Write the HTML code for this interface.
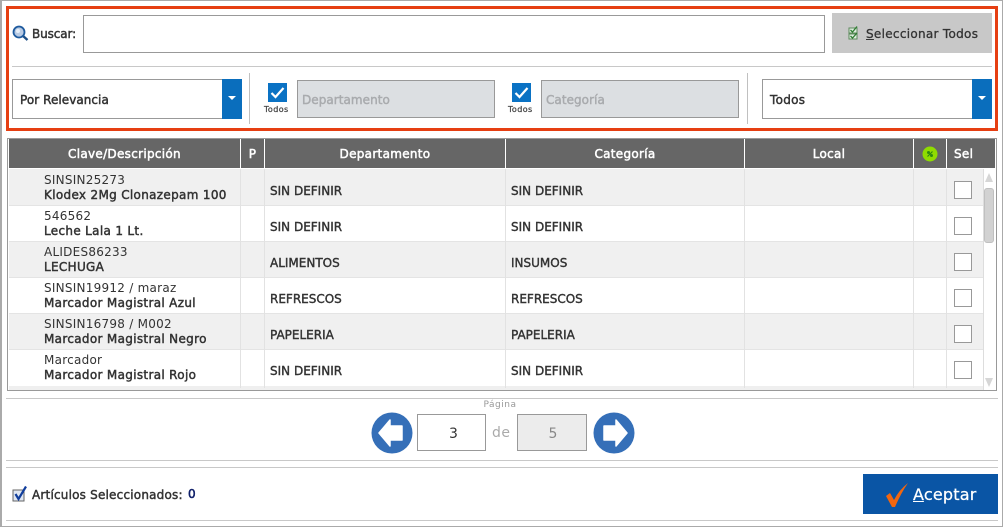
<!DOCTYPE html>
<html><head><meta charset="utf-8">
<style>
html,body{margin:0;padding:0;background:#fff;}
body{width:1004px;height:527px;position:relative;overflow:hidden;font-family:"DejaVu Sans","Liberation Sans",sans-serif;font-size:12px;color:#333;}
div{position:absolute;box-sizing:border-box;}
.t{white-space:nowrap;line-height:14px;letter-spacing:.25px;font-size:12px;}
.b{-webkit-text-stroke:.45px currentColor;letter-spacing:.05px;}
.m{letter-spacing:.32px;}
.hl{background:#c8c8c8;height:1px;}
.vl{background:#c0c0c0;width:1px;}
.in{background:#fff;border:1px solid #999;}
.dis{background:#dcdfe2;border:1px solid #999;}
.arr{background:#0a6ebd;width:20px;}
.arr:after{content:"";position:absolute;left:6px;top:17px;border-left:4px solid transparent;border-right:4px solid transparent;border-top:4px solid #fff;}
.ck{background:#0a72c4;width:19px;height:19px;}
.h{background:#666;height:29px;top:139px;color:#fff;text-align:center;line-height:31px;letter-spacing:.3px;font-size:12px;-webkit-text-stroke:.5px #fff;}
.row{left:9px;width:974px;height:36px;}
.col{top:169px;height:219px;width:1px;background:#e2e2e2;}
.c1{left:44px;color:#333;}
.sb{left:954px;width:18px;height:18px;background:#fff;border:1px solid #999;}
.cell{font-size:12px;color:#333;-webkit-text-stroke:.4px #333;white-space:nowrap;line-height:14px;}
.td{font-size:8px;color:#444;-webkit-text-stroke:.25px #444;white-space:nowrap;line-height:12px;letter-spacing:.4px;}
</style></head><body>
<div style="left:0;top:0;width:1003px;height:527px;border:1px solid #aaa;border-left-width:2px;"></div>
<div style="left:6px;top:6px;width:992px;height:125px;border:3px solid #e63f12;"></div>

<svg style="position:absolute;left:12px;top:25px" width="17" height="17" viewBox="0 0 17 17"><line x1="10" y1="10" x2="15.500" y2="15" stroke="#1d4f86" stroke-width="2.400"/><circle cx="7" cy="7" r="5.500" fill="#b9cbe4" stroke="#1d5a9e" stroke-width="1.800"/><circle cx="6" cy="6" r="2" fill="#e6eef8"/></svg>
<div class="t b" style="left:32px;top:27px;letter-spacing:-.1px;">Buscar:</div>
<div class="in" style="left:83px;top:15px;width:742px;height:38px;"></div>
<div style="left:832px;top:13px;width:160px;height:40px;background:#c8c8c8;"></div>
<svg style="position:absolute;left:848px;top:26px" width="12" height="15" viewBox="0 0 12 15"><rect x="1" y="2" width="8" height="5" fill="#dfeee0" stroke="#5c8a5c"/><rect x="1" y="8" width="8" height="5" fill="#dfeee0" stroke="#5c8a5c"/><path d="M2.500 4 L4.500 6 L9 .500 M2.500 10 L4.500 12 L9 7" fill="none" stroke="#2f7d32" stroke-width="1.300"/></svg>
<div class="t" style="left:866px;top:27px;letter-spacing:.3px;color:#333;-webkit-text-stroke:.3px #333;"><span style="text-decoration:underline">S</span>eleccionar Todos</div>
<div class="hl" style="left:12px;top:66px;width:980px;"></div>

<div class="in" style="left:12px;top:79px;width:230px;height:40px;"></div>
<div class="arr" style="left:222px;top:79px;height:40px;"></div>
<div class="t b" style="left:20px;top:93px;letter-spacing:.05px;">Por Relevancia</div>
<div class="vl" style="left:249px;top:73px;height:51px;"></div>

<div class="ck" style="left:268px;top:83px;"></div>
<svg style="position:absolute;left:268px;top:83px" width="19" height="19" viewBox="0 0 19 19"><path d="M3.500 10 L7.500 14 L15.500 5" fill="none" stroke="#fff" stroke-width="2.200"/></svg>
<div class="td" style="left:264px;top:104px;">Todos</div>
<div class="dis" style="left:297px;top:80px;width:198px;height:38px;"></div>
<div class="t b" style="left:302px;top:93px;color:#a9abae;">Departamento</div>

<div class="ck" style="left:512px;top:83px;"></div>
<svg style="position:absolute;left:512px;top:83px" width="19" height="19" viewBox="0 0 19 19"><path d="M3.500 10 L7.500 14 L15.500 5" fill="none" stroke="#fff" stroke-width="2.200"/></svg>
<div class="td" style="left:508px;top:104px;">Todos</div>
<div class="dis" style="left:541px;top:80px;width:198px;height:38px;"></div>
<div class="t b" style="left:546px;top:93px;color:#a9abae;">Categoría</div>
<div class="vl" style="left:747px;top:73px;height:51px;"></div>

<div class="in" style="left:762px;top:79px;width:230px;height:40px;"></div>
<div class="arr" style="left:972px;top:79px;height:40px;"></div>
<div class="t b" style="left:770px;top:93px;letter-spacing:.3px;">Todos</div>

<!-- table -->
<div style="left:7px;top:138px;width:990px;height:253px;border:1px solid #999;"></div>
<div class="h" style="left:9px;width:231px;">Clave/Descripción</div>
<div class="h" style="left:241px;width:23px;">P</div>
<div class="h" style="left:265px;width:240px;">Departamento</div>
<div class="h" style="left:506px;width:238px;">Categoría</div>
<div class="h" style="left:745px;width:168px;">Local</div>
<div class="h" style="left:914px;width:32px;"></div>
<div class="h" style="left:947px;width:48px;text-align:left;padding-left:7px;">Sel</div>
<svg style="position:absolute;left:922px;top:146px" width="16" height="16" viewBox="0 0 16 16"><circle cx="8" cy="8" r="7.500" fill="#8fdc00"/><circle cx="6.500" cy="6.500" r="1.500" fill="#2d8a10"/><circle cx="9.500" cy="9.500" r="1.500" fill="#2d8a10"/><path d="M5.500 10.500 L10.500 5.500" stroke="#2d8a10" stroke-width="1.200"/></svg>

<div class="row" style="top:169px;background:#f0f0f0;"></div>
<div class="row" style="top:205px;background:#fff;"></div>
<div class="row" style="top:241px;background:#f0f0f0;"></div>
<div class="row" style="top:277px;background:#fff;"></div>
<div class="row" style="top:313px;background:#f0f0f0;"></div>
<div class="row" style="top:349px;background:#fff;"></div>
<div class="hl" style="left:9px;top:205px;width:974px;background:#e4e4e4;"></div>
<div class="hl" style="left:9px;top:241px;width:974px;background:#e4e4e4;"></div>
<div class="hl" style="left:9px;top:277px;width:974px;background:#e4e4e4;"></div>
<div class="hl" style="left:9px;top:313px;width:974px;background:#e4e4e4;"></div>
<div class="hl" style="left:9px;top:349px;width:974px;background:#e4e4e4;"></div>
<div style="left:9px;top:386px;width:974px;height:4px;background:#efefef;"></div>
<div class="col" style="left:240px;"></div>
<div class="col" style="left:264px;"></div>
<div class="col" style="left:505px;"></div>
<div class="col" style="left:744px;"></div>
<div class="col" style="left:913px;"></div>
<div class="col" style="left:946px;"></div>

<div class="t c1" style="top:173px;">SINSIN25273</div><div class="t c1 b m" style="top:188px;">Klodex 2Mg Clonazepam 100</div>
<div class="t c1" style="top:209px;">546562</div><div class="t c1 b m" style="top:224px;">Leche Lala 1 Lt.</div>
<div class="t c1" style="top:245px;">ALIDES86233</div><div class="t c1 b m" style="top:260px;">LECHUGA</div>
<div class="t c1" style="top:281px;">SINSIN19912 / maraz</div><div class="t c1 b m" style="top:296px;">Marcador Magistral Azul</div>
<div class="t c1" style="top:317px;">SINSIN16798 / M002</div><div class="t c1 b m" style="top:332px;">Marcador Magistral Negro</div>
<div class="t c1" style="top:353px;">Marcador</div><div class="t c1 b m" style="top:368px;">Marcador Magistral Rojo</div>

<div class="cell" style="left:270px;top:184px;">SIN DEFINIR</div><div class="cell" style="left:511px;top:184px;">SIN DEFINIR</div>
<div class="cell" style="left:270px;top:220px;">SIN DEFINIR</div><div class="cell" style="left:511px;top:220px;">SIN DEFINIR</div>
<div class="cell" style="left:270px;top:256px;">ALIMENTOS</div><div class="cell" style="left:511px;top:256px;">INSUMOS</div>
<div class="cell" style="left:270px;top:292px;">REFRESCOS</div><div class="cell" style="left:511px;top:292px;">REFRESCOS</div>
<div class="cell" style="left:270px;top:328px;">PAPELERIA</div><div class="cell" style="left:511px;top:328px;">PAPELERIA</div>
<div class="cell" style="left:270px;top:364px;">SIN DEFINIR</div><div class="cell" style="left:511px;top:364px;">SIN DEFINIR</div>

<div class="sb" style="top:181px;"></div>
<div class="sb" style="top:217px;"></div>
<div class="sb" style="top:253px;"></div>
<div class="sb" style="top:289px;"></div>
<div class="sb" style="top:325px;"></div>
<div class="sb" style="top:361px;"></div>

<div style="left:983px;top:169px;width:13px;height:221px;background:#fff;border-left:1px solid #ddd;"></div>
<div style="left:984px;top:188px;width:10px;height:55px;background:#d2d2d2;border:1px solid #c0c0c0;border-radius:3px;"></div>
<svg style="position:absolute;left:984px;top:172px" width="10" height="11"><path d="M5 1 L9 10 L1 10Z" fill="#d6d6d6"/></svg>
<svg style="position:absolute;left:984px;top:377px" width="10" height="11"><path d="M1 1 L9 1 L5 10Z" fill="#d6d6d6"/></svg>

<div class="hl" style="left:6px;top:398px;width:992px;"></div>
<div style="left:340px;top:399px;width:320px;text-align:center;font-size:9px;color:#999;letter-spacing:.5px;line-height:13px;">Página</div>

<svg style="position:absolute;left:371px;top:412px" width="42" height="42" viewBox="0 0 42 42"><circle cx="21" cy="21" r="20.500" fill="#356fb8"/><path d="M8 21 L19 8 L19 14 L31 14 L31 28 L19 28 L19 34Z" fill="#fff" stroke="#fff" stroke-width="1.500" stroke-linejoin="round"/></svg>
<div class="in" style="left:417px;top:414px;width:69px;height:37px;padding-left:4px;text-align:center;line-height:38px;font-size:14px;color:#333;">3</div>
<div style="left:492px;top:423px;font-size:14px;color:#aaa;line-height:20px;letter-spacing:.5px;">de</div>
<div class="in" style="left:517px;top:414px;width:70px;height:37px;padding-left:2px;background:#ececec;text-align:center;line-height:38px;font-size:14px;color:#888;">5</div>
<svg style="position:absolute;left:593px;top:412px" width="42" height="42" viewBox="0 0 42 42"><circle cx="21" cy="21" r="20.500" fill="#356fb8"/><path d="M34 21 L23 8 L23 14 L11 14 L11 28 L23 28 L23 34Z" fill="#fff" stroke="#fff" stroke-width="1.500" stroke-linejoin="round"/></svg>

<div class="hl" style="left:6px;top:460px;width:992px;"></div>
<div class="hl" style="left:6px;top:467px;width:992px;"></div>

<svg style="position:absolute;left:11px;top:485px" width="18" height="18" viewBox="0 0 18 18"><rect x="2" y="5" width="11" height="11" fill="#dfe6f2" stroke="#666"/><path d="M4.500 9 L7.500 14 L15 1.500" fill="none" stroke="#103d9c" stroke-width="2.200"/></svg>
<div class="t b" style="left:32px;top:488px;letter-spacing:.2px;">Artículos Seleccionados:</div>
<div class="t" style="left:188px;top:487px;color:#10206a;-webkit-text-stroke:.5px #10206a;">0</div>

<div class="hl" style="left:6px;top:520px;width:992px;"></div>
<div style="left:863px;top:474px;width:135px;height:40px;background:#0a55a5;"></div>
<svg style="position:absolute;left:884px;top:481px" width="26" height="27" viewBox="0 0 26 27"><path d="M2 15 L6 12 L10 19 Q15 9 24 2 Q17 12 11 26 L8 26Z" fill="#f2660f"/></svg>
<div class="t" style="left:913px;top:485px;color:#fff;font-size:16px;line-height:20px;letter-spacing:.2px;-webkit-text-stroke:.25px #fff;"><span style="text-decoration:underline">A</span>ceptar</div>
</body></html>
